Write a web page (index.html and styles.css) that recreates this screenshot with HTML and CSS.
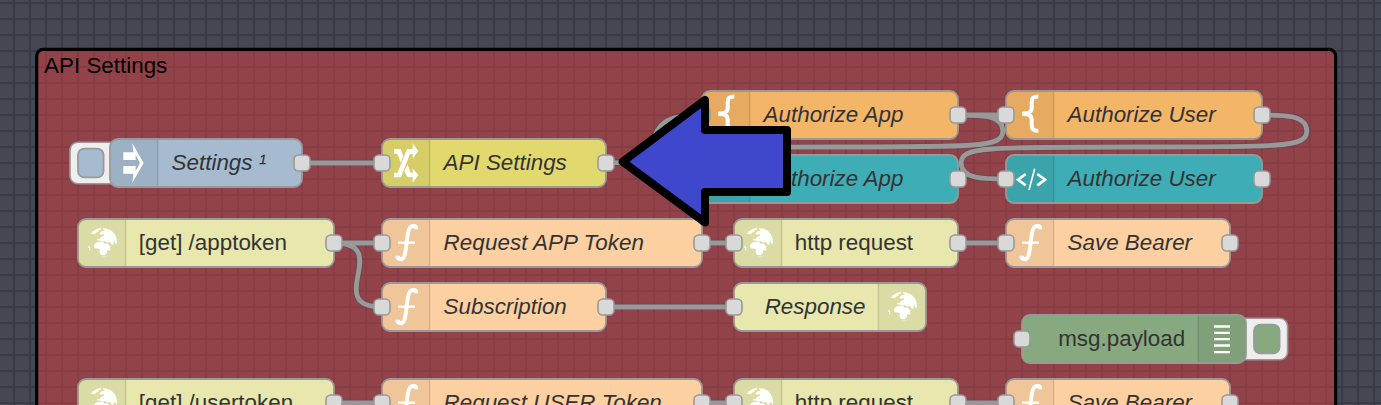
FILE: index.html
```html
<!DOCTYPE html>
<html lang="en">
<head>
<meta charset="utf-8">
<title>Flow editor</title>
<link rel="stylesheet" href="styles.css">
</head>
<body>
<main class="workspace">
<svg class="canvas" width="1381" height="405" viewBox="0 0 1381 405">
  <defs>
    <pattern id="grid" width="16" height="16" patternUnits="userSpaceOnUse">
      <path class="grid-line" d="M13 0h2v16h-2zM0 2h13v2H0zM15 2h1v2h-1z"/>
    </pattern>
    <pattern id="group-grid" width="10" height="10" patternUnits="userSpaceOnUse" patternTransform="translate(-8.75 -1.875)">
      <path class="group-line" d="M8.125 0h1.25v10h-1.25zM0 1.25h8.125v1.25H0zM9.375 1.25H10v1.25h-.625z"/>
    </pattern>
    <g id="shade">
      <path class="shade" d="M5 .5H30v29H5A4.500 4.500 0 0 1 .5 25V5A4.500 4.500 0 0 1 5 .5z"/>
      <path class="divider" d="M29.800 .5v29"/>
    </g>
    <g id="shade-right">
      <path class="shade" d="M0 .5H25a4.500 4.500 0 0 1 4.500 4.500v20a4.500 4.500 0 0 1-4.500 4.500H0z"/>
      <path class="divider" d="M.2 .5v29"/>
    </g>
    <rect id="port" class="port" x="-5" y="10" width="10" height="10" rx="3"/>
    <g id="i-inject" transform="scale(.20833)">
      <path class="glyph" d="M67 13L101 72 67 131 70 104H40V81H77V97L90 72 77 47V63H40V40H70z"/>
    </g>
    <g id="i-change" transform="scale(.20833)">
      <path class="glyph" d="M36 30H56L64 50 56 71 46 44H36zM92 13L109 36 92 59V45H84L57 115H36V101H47L75 30H92zM77 78L86 101H92V88L109 109 92 131V115H77L67 96z"/>
    </g>
    <g id="i-function" transform="scale(.20833)">
      <path class="stroke-f" d="M46 110C46 124 64 124 68 108C74 88 74 57 79 38C83 17 103 16 103 31"/>
      <path class="stroke-bar" d="M48 71H99"/>
    </g>
    <g id="i-brace" transform="scale(.20833)">
      <path class="stroke-f" d="M97 17C82 16 77 21 77 35V50C77 62 71 67 49 68C71 69 77 74 77 86V101C77 115 82 120 97 119"/>
    </g>
    <g id="i-code" transform="scale(.20833)">
      <path class="stroke-code" d="M59 57L36 74 59 91M94 57L117 74 94 91"/>
      <path class="stroke-slash" d="M86 41L69 105"/>
    </g>
    <g id="i-globe" transform="scale(.20833)">
      <path class="glyph" d="M38 45C45 34 58 28 70 28L69 32 60 34 63 37 53 42 49 47 45 44zM74 28C97 27 114 42 117 65L116 77 110 69 107 68 106 79 101 75 96 68 92 71 86 69 79 66 75 68 66 65 57 64 58 60 66 59 70 53 79 50 77 46 67 47 64 44 72 36 80 37 77 32z"/>
      <path class="glyph" d="M47 80L54 71 64 68 76 69 79 74 90 73 94 81 99 80 93 90 87 95 87 102 80 109 69 108 65 100 65 90 51 88zM96 88L98 92 93 96 91 92zM30 80L36 84 38 92 34 95z"/>
      <path class="globe-edge" d="M74 112l14 1"/>
    </g>
    <g id="i-debug" transform="scale(.20833)">
      <path class="glyph" d="M48 31H96V38H48zM48 50H96V57H48zM48 69H96V76H48zM48 88H96V95H48zM48 108H96V115H48z"/>
    </g>
  </defs>

  <rect class="background" width="1381" height="405"/>
  <rect width="1381" height="405" fill="url(#grid)"/>

  <g transform="translate(14 3) scale(1.6)">
    <rect class="group" x="14.200" y="29" width="811.800" height="260" rx="4"/>
    <rect x="15.200" y="30" width="809.800" height="258" rx="3" fill="url(#group-grid)"/>
    <rect class="group-border" x="14.200" y="29" width="811.800" height="260" rx="4"/>
    <text class="group-label" x="18.800" y="43.750">API Settings</text>

    <g class="wires wire-edge">
      <path id="wires" d="M180 100H230M370 100C420 100 380 70 430 70M590 70H620
        M590 70c14 0 28 0 28 10s-14 10-108 10s-108 0-108 10s14 10 28 10
        M780 70c14 0 28 0 28 10s-14 10-108 10s-108 0-108 10s14 10 28 10
        M200 150H230M200 150C237.500 150 192.500 190 230 190M430 150H450M590 150H620
        M370 190H450M200 250H230M430 250H450M590 250H620"/>
    </g>
    <use class="wires wire-line" href="#wires"/>

    <g transform="translate(60 85)">
      <rect class="button" x="-25" y="2" width="32" height="26" rx="5"/>
      <rect class="box inject" x="-20" y="6" width="16" height="18" rx="4"/>
      <rect class="box inject" width="120" height="30" rx="5"/>
      <use href="#shade"/><use href="#i-inject"/>
      <text class="label named" x="38.500" y="19.500">Settings ¹</text>
      <use href="#port" x="120"/>
    </g>
    <g transform="translate(230 85)">
      <rect class="box change" width="140" height="30" rx="5"/>
      <use href="#shade"/><use href="#i-change"/>
      <text class="label named" x="38.500" y="19.500">API Settings</text>
      <use href="#port"/><use href="#port" x="140"/>
    </g>
    <g transform="translate(430 55)">
      <rect class="box template" width="160" height="30" rx="5"/>
      <use href="#shade"/><use href="#i-brace"/>
      <text class="label named" x="38.500" y="19.500">Authorize App</text>
      <use href="#port"/><use href="#port" x="160"/>
    </g>
    <g transform="translate(430 95)">
      <rect class="box ui" width="160" height="30" rx="5"/>
      <use href="#shade"/><use href="#i-code"/>
      <text class="label named" x="38.500" y="19.500">Authorize App</text>
      <use href="#port"/><use href="#port" x="160"/>
    </g>
    <g transform="translate(620 55)">
      <rect class="box template" width="160" height="30" rx="5"/>
      <use href="#shade"/><use href="#i-brace"/>
      <text class="label named" x="38.500" y="19.500">Authorize User</text>
      <use href="#port"/><use href="#port" x="160"/>
    </g>
    <g transform="translate(620 95)">
      <rect class="box ui" width="160" height="30" rx="5"/>
      <use href="#shade"/><use href="#i-code"/>
      <text class="label named" x="38.500" y="19.500">Authorize User</text>
      <use href="#port"/><use href="#port" x="160"/>
    </g>

    <g transform="translate(40 135)">
      <rect class="box http" width="160" height="30" rx="5"/>
      <use href="#shade"/><use href="#i-globe"/>
      <text class="label" x="38" y="19.500">[get] /apptoken</text>
      <use href="#port" x="160"/>
    </g>
    <g transform="translate(230 135)">
      <rect class="box function" width="200" height="30" rx="5"/>
      <use href="#shade"/><use href="#i-function"/>
      <text class="label named" x="38.500" y="19.500" textLength="125.200">Request APP Token</text>
      <use href="#port"/><use href="#port" x="200"/>
    </g>
    <g transform="translate(450 135)">
      <rect class="box http" width="140" height="30" rx="5"/>
      <use href="#shade"/><use href="#i-globe"/>
      <text class="label" x="38" y="19.500">http request</text>
      <use href="#port"/><use href="#port" x="140"/>
    </g>
    <g transform="translate(620 135)">
      <rect class="box function" width="140" height="30" rx="5"/>
      <use href="#shade"/><use href="#i-function"/>
      <text class="label named" x="38.500" y="19.500">Save Bearer</text>
      <use href="#port"/><use href="#port" x="140"/>
    </g>

    <g transform="translate(230 175)">
      <rect class="box function" width="140" height="30" rx="5"/>
      <use href="#shade"/><use href="#i-function"/>
      <text class="label named" x="38.500" y="19.500">Subscription</text>
      <use href="#port"/><use href="#port" x="140"/>
    </g>
    <g transform="translate(450 175)">
      <rect class="box http" width="120" height="30" rx="5"/>
      <use href="#shade-right" x="90"/><use href="#i-globe" x="90"/>
      <text class="label named end" x="82.200" y="19.500">Response</text>
      <use href="#port"/>
    </g>
    <g transform="translate(630 195)">
      <rect class="button" x="134" y="2" width="32" height="26" rx="5"/>
      <rect class="box debug" x="145" y="6" width="16" height="18" rx="4"/>
      <rect class="box debug" width="140" height="30" rx="5"/>
      <use href="#shade-right" x="110"/><use href="#i-debug" x="110"/>
      <text class="label end" x="102" y="19.500">msg.payload</text>
      <use href="#port"/>
    </g>

    <g transform="translate(40 235)">
      <rect class="box http" width="160" height="30" rx="5"/>
      <use href="#shade"/><use href="#i-globe"/>
      <text class="label" x="38" y="19.500">[get] /usertoken</text>
      <use href="#port" x="160"/>
    </g>
    <g transform="translate(230 235)">
      <rect class="box function" width="200" height="30" rx="5"/>
      <use href="#shade"/><use href="#i-function"/>
      <text class="label named" x="38.500" y="19.500">Request USER Token</text>
      <use href="#port"/><use href="#port" x="200"/>
    </g>
    <g transform="translate(450 235)">
      <rect class="box http" width="140" height="30" rx="5"/>
      <use href="#shade"/><use href="#i-globe"/>
      <text class="label" x="38" y="19.500">http request</text>
      <use href="#port"/><use href="#port" x="140"/>
    </g>
    <g transform="translate(620 235)">
      <rect class="box function" width="140" height="30" rx="5"/>
      <use href="#shade"/><use href="#i-function"/>
      <text class="label named" x="38.500" y="19.500">Save Bearer</text>
      <use href="#port"/><use href="#port" x="140"/>
    </g>
  </g>

  <path class="pointer" d="M622.700 161.700L705 100V130H787V192H705V222.500z"/>
</svg>
</main>
</body>
</html>
```
FILE: styles.css
```css
body {
  margin: 0;
  background: #444854;
}

.workspace {
  width: 1381px;
  height: 405px;
  overflow: hidden;
}

.canvas {
  display: block;
}

.background { fill: #444854; }
.grid-line { fill: #383b43; }

.group { fill: #92434a; }
.group-line { fill: #883c43; }
.group-border {
  fill: none;
  stroke: #000;
  stroke-width: 2;
}

.group-label,
.label {
  font-family: "Liberation Sans", Arial, sans-serif;
  font-size: 14px;
}
.group-label { fill: #000; }
.label { fill: #333; }
.named { font-style: italic; }
.end { text-anchor: end; }

.wires { fill: none; }
.wire-edge {
  stroke: #5f4550;
  stroke-width: 4;
  opacity: .75;
}
.wire-line {
  stroke: #999;
  stroke-width: 3;
}

.box {
  stroke: #999;
  stroke-width: 1.100;
}
.inject { fill: #a6bbcf; }
.change { fill: #e2d96e; }
.template { fill: #f3b567; }
.ui { fill: #3fadb5; }
.http { fill: #e7e7ae; }
.function { fill: #fdd0a2; }
.debug { fill: #87a980; }

.button {
  fill: #eee;
  stroke: #999;
}
.port {
  fill: #d9d9d9;
  stroke: #999;
}

.shade { fill: rgba(0, 0, 0, .05); }
.divider {
  stroke: rgba(0, 0, 0, .1);
  stroke-width: 1;
}

.glyph { fill: #fff; }
.stroke-f,
.stroke-bar,
.stroke-code,
.stroke-slash,
.globe-edge {
  fill: none;
  stroke: #fff;
}
.stroke-f { stroke-width: 12; }
.stroke-bar { stroke-width: 7; }
.stroke-code { stroke-width: 8; }
.stroke-slash { stroke-width: 5; }
.globe-edge {
  stroke-width: 2;
  opacity: .5;
}

.pointer {
  fill: #3f48cc;
  stroke: #000;
  stroke-width: 8;
  stroke-linejoin: round;
}
```
